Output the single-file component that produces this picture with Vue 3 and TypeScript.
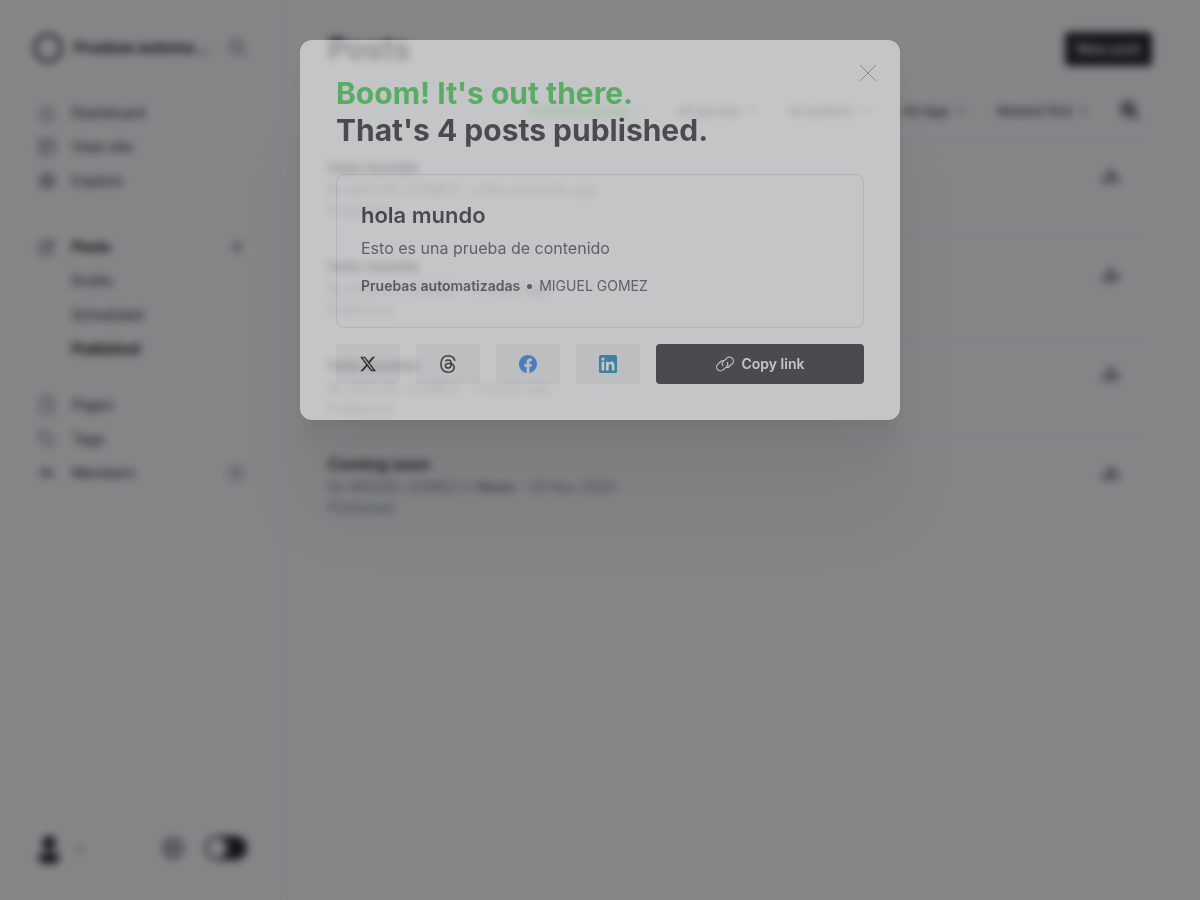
<script setup lang="ts">
import { ref } from 'vue'

interface NavItem { label: string; icon?: string; active?: boolean; sub?: boolean; plus?: boolean; count?: number }
interface Post { title: string; meta: string; tag?: string; date: string }

const groups: NavItem[][] = [
  [
    { label: 'Dashboard', icon: 'home' },
    { label: 'View site', icon: 'site' },
    { label: 'Explore', icon: 'globe' },
  ],
  [
    { label: 'Posts', icon: 'edit', active: true, plus: true },
    { label: 'Drafts', sub: true },
    { label: 'Scheduled', sub: true },
    { label: 'Published', sub: true, active: true },
  ],
  [
    { label: 'Pages', icon: 'page' },
    { label: 'Tags', icon: 'tag' },
    { label: 'Members', icon: 'members', count: 1 },
  ],
]

const icons: Record<string, string> = {
  home: 'M1 8 8 1l7 7M3 7v8h10V7',
  site: 'M1 1h14v14H1zM1 5h14M6 5v10',
  globe: 'M8 1a7 7 0 1 0 0 14A7 7 0 1 0 8 1M1 8h14M8 1c-5 4-5 10 0 14M8 1c5 4 5 10 0 14',
  edit: 'M9 3H1v12h12V8M6 10l1-3 7-6 1 2-6 6z',
  page: 'M2 1h8l4 4v10H2zM10 1v4h4',
  tag: 'M1 1h6l8 8-6 6-8-8zM4 4h1',
  members: 'M5 4a2 2 0 1 0 0 4 2 2 0 1 0 0-4M1 13c0-5 8-5 8 0M11 5a2 2 0 1 0 0 4 2 2 0 1 0 0-4M10 10c3-1 5 1 5 3',
}

const posts: Post[] = [
  { title: 'hola mundo', meta: 'By MIGUEL GOMEZ', date: 'a few seconds ago' },
  { title: 'hola mundo', meta: 'By MIGUEL GOMEZ', date: '2 hours ago' },
  { title: 'hola mundo', meta: 'By MIGUEL GOMEZ', date: '3 hours ago' },
  { title: 'Coming soon', meta: 'By MIGUEL GOMEZ in', tag: 'News', date: '28 Nov 2024' },
]

const filters = ['Published posts', 'All access', 'All authors', 'All tags', 'Newest first']
const night = ref(false)
</script>

<template>
  <div class="app">
    <aside class="sidebar">
      <header class="brand">
        <svg class="logo" viewBox="0 0 32 32"><circle cx="16" cy="16" r="13" /></svg>
        <strong>Pruebas automatizadas</strong>
        <button class="plain" aria-label="Search">
          <svg class="line" width="18" height="18" viewBox="0 0 18 18"><circle cx="7" cy="7" r="6" /><path d="m12 12 5 5" /></svg>
        </button>
      </header>
      <nav>
        <ul v-for="(group, g) in groups" :key="g">
          <li v-for="item in group" :key="item.label">
            <a href="#" :class="{ active: item.active, sub: item.sub }">
              <svg v-if="item.icon" class="line" width="16" height="16" viewBox="0 0 16 16"><path :d="icons[item.icon]" /></svg>
              <span>{{ item.label }}</span>
            </a>
            <button v-if="item.plus" class="plain add" aria-label="New post">
              <svg class="line" width="14" height="14" viewBox="0 0 14 14"><path d="M7 1v12M1 7h12" /></svg>
            </button>
            <span v-if="item.count" class="count">{{ item.count }}</span>
          </li>
        </ul>
      </nav>
      <footer class="tools">
        <button class="plain user" aria-label="Account">
          <svg width="26" height="32" viewBox="0 0 26 32"><circle cx="13" cy="11" r="7" fill="#15171a" /><ellipse cx="13" cy="26" rx="11" ry="6" fill="#15171a" /></svg>
          <svg class="line" width="8" height="5" viewBox="0 0 8 5"><path d="m1 1 3 3 3-3" /></svg>
        </button>
        <button class="plain" aria-label="Settings">
          <svg class="gear" width="24" height="24" viewBox="0 0 24 24"><circle cx="12" cy="12" r="9" /><circle cx="12" cy="12" r="4" /></svg>
        </button>
        <input v-model="night" class="switch" type="checkbox" aria-label="Night shift">
      </footer>
    </aside>

    <main class="content">
      <header class="heading">
        <h1>Posts</h1>
        <button class="new">New post</button>
      </header>
      <div class="filters">
        <button v-for="(f, i) in filters" :key="f" class="filter" :class="{ on: i === 0 }">
          {{ f }}
          <svg class="line" width="8" height="5" viewBox="0 0 8 5"><path d="m1 1 3 3 3-3" /></svg>
        </button>
        <button class="view" aria-label="Search posts">
          <svg width="20" height="20" viewBox="0 0 20 20"><circle cx="8" cy="8" r="6" /><path d="m12 12 6 6M5 8h6M8 5v6" /></svg>
        </button>
      </div>
      <ul class="posts">
        <li v-for="(p, i) in posts" :key="i">
          <div>
            <h3>{{ p.title }}</h3>
            <p>{{ p.meta }} <b v-if="p.tag">{{ p.tag }}</b> - {{ p.date }}</p>
            <p>Published</p>
          </div>
          <button class="stats" aria-label="Analytics">
            <svg width="18" height="16" viewBox="0 0 18 16"><path d="M1 9h4v6H1zM7 1h4v14H7zM13 6h4v9h-4z" /></svg>
          </button>
        </li>
      </ul>
    </main>

    <div class="backdrop">
      <section class="modal" role="dialog" aria-modal="true" aria-labelledby="modal-title">
        <button class="plain close" aria-label="Close">
          <svg width="18" height="18" viewBox="0 0 18 18"><path d="m1 1 16 16M17 1 1 17" /></svg>
        </button>
        <h2 id="modal-title"><span>Boom! It's out there.</span><br>That's 4 posts published.</h2>
        <a class="card" href="#">
          <h4>hola mundo</h4>
          <p>Esto es una prueba de contenido</p>
          <div class="byline"><b>Pruebas automatizadas</b><i></i><span>MIGUEL GOMEZ</span></div>
        </a>
        <div class="share">
          <a href="#" aria-label="Share on X">
            <svg width="18" height="18" viewBox="0 0 24 24" fill="#000"><path d="M18.244 2.25h3.308l-7.227 8.26 8.502 11.24H16.17l-5.214-6.817L4.99 21.75H1.68l7.73-8.835L1.254 2.25H8.08l4.713 6.231zm-1.161 17.52h1.833L7.084 4.126H5.117z" /></svg>
          </a>
          <a href="#" aria-label="Share on Threads">
            <svg width="18" height="18" viewBox="0 0 192 192" fill="#000"><path d="M141.537 88.988a66.667 66.667 0 0 0-2.518-1.143c-1.482-27.307-16.403-42.94-41.457-43.1h-.34c-14.986 0-27.449 6.396-35.12 18.036l13.779 9.452c5.73-8.695 14.724-10.548 21.348-10.548h.229c8.249.053 14.474 2.452 18.503 7.129 2.932 3.405 4.893 8.111 5.864 14.05-7.314-1.243-15.224-1.626-23.68-1.14-23.82 1.371-39.134 15.264-38.105 34.568.522 9.792 5.4 18.216 13.735 23.719 7.047 4.652 16.124 6.927 25.557 6.412 12.458-.683 22.231-5.436 29.049-14.127 5.178-6.6 8.453-15.153 9.899-25.93 5.937 3.583 10.337 8.298 12.767 13.966 4.132 9.635 4.373 25.468-8.546 38.376-11.319 11.308-24.925 16.2-45.488 16.351-22.809-.169-40.06-7.484-51.275-21.742C35.236 139.966 29.808 120.682 29.605 96c.203-24.682 5.63-43.966 16.133-57.317C56.954 24.425 74.204 17.11 97.013 16.94c22.975.17 40.526 7.52 52.171 21.847 5.71 7.026 10.015 15.86 12.853 26.162l16.147-4.308c-3.44-12.68-8.853-23.606-16.219-32.668C147.036 9.607 125.202.195 97.07 0h-.113C68.882.194 47.292 9.642 32.788 28.08 19.882 44.485 13.224 67.315 13.001 95.932L13 96v.067c.224 28.617 6.882 51.447 19.788 67.854C47.292 182.358 68.882 191.806 96.957 192h.113c24.96-.173 42.554-6.708 57.048-21.189 18.963-18.945 18.392-42.692 12.142-57.27-4.484-10.454-13.033-18.945-24.723-24.553ZM98.44 129.507c-10.44.588-21.286-4.098-21.82-14.135-.397-7.442 5.296-15.746 22.461-16.735 1.966-.114 3.895-.169 5.79-.169 6.235 0 12.068.606 17.371 1.765-1.978 24.702-13.58 28.713-23.802 29.274Z" /></svg>
          </a>
          <a href="#" aria-label="Share on Facebook">
            <svg width="18" height="18" viewBox="0 0 24 24" fill="#1877f2"><path d="M24 12.073C24 5.405 18.627 0 12 0S0 5.405 0 12.073C0 18.1 4.388 23.094 10.125 24v-8.437H7.078v-3.49h3.047v-2.66c0-3.025 1.792-4.697 4.533-4.697 1.312 0 2.686.236 2.686.236v2.971h-1.513c-1.491 0-1.956.93-1.956 1.886v2.264h3.328l-.532 3.49h-2.796V24C19.612 23.094 24 18.1 24 12.073z" /></svg>
          </a>
          <a href="#" aria-label="Share on LinkedIn">
            <svg width="18" height="18" viewBox="0 0 24 24" fill="#007ebb"><path d="M22 0H2a2 2 0 0 0-2 2v20a2 2 0 0 0 2 2h20a2 2 0 0 0 2-2V2a2 2 0 0 0-2-2z" /><path fill="#fff" d="M3.5 9h3.6v11.5H3.500zM5.300 3.300a2.100 2.100 0 1 1 0 4.200 2.100 2.100 0 0 1 0-4.200zM9.300 9h3.400v1.600c.5-.9 1.700-1.900 3.500-1.900 3.700 0 4.400 2.400 4.400 5.600v6.200H17V15c0-1.400 0-3.100-1.900-3.100S12.900 13.400 12.900 15v5.500H9.300z" /></svg>
          </a>
          <button class="copy">
            <svg width="18" height="18" viewBox="0 0 24 24"><path d="M9.500 14.500a4.300 4.300 0 0 1 .3-6l4.700-4.300a5.200 5.200 0 0 1 7.300.3 5.200 5.200 0 0 1-.3 7.300l-3.800 3.500a5.200 5.200 0 0 1-4.200 1.300" /><path d="M14.500 9.500a4.300 4.300 0 0 1-.3 6l-4.700 4.300a5.200 5.200 0 0 1-7.300-.3 5.200 5.200 0 0 1 .3-7.300l3.800-3.500a5.200 5.200 0 0 1 4.200-1.300" /></svg>
            Copy link
          </button>
        </div>
      </section>
    </div>
  </div>
</template>

<style>
html, body { background: #fff; }
</style>

<style scoped>
* { box-sizing: border-box; }
.app { display: flex; min-height: 100vh; background: #fff; color: #15171a; font: 14px/20px Inter, "Liberation Sans", sans-serif; }
ul { list-style: none; margin: 0; padding: 0; }
h1, h2, h3, h4, p { margin: 0; }
a { color: inherit; text-decoration: none; }
button { font: inherit; color: inherit; cursor: pointer; }
svg { display: block; flex: none; }
.plain { border: 0; padding: 0; background: none; display: flex; align-items: center; }
.line { fill: none; stroke: currentColor; stroke-width: 1.5; }

.sidebar { width: 281px; flex: none; display: flex; flex-direction: column; padding: 32px 33px 32px 32px; border-right: 1px solid #eceef0; }
.brand { display: flex; align-items: center; gap: 10px; height: 32px; margin-bottom: 32px; }
.brand strong { flex: 1; min-width: 0; font-size: 15px; font-weight: 700; overflow: hidden; white-space: nowrap; text-overflow: ellipsis; }
.brand .plain { margin-left: 8px; color: #394047; }
.logo { width: 32px; height: 32px; fill: none; stroke: #15171a; stroke-width: 3; }
nav ul { margin-bottom: 32px; }
nav ul:nth-child(2) { margin-bottom: 22px; }
nav li { display: flex; align-items: center; justify-content: space-between; height: 34px; }
nav a { display: flex; align-items: center; gap: 17px; padding-left: 7px; color: #394047; font-weight: 500; }
nav a.sub { padding-left: 40px; }
nav a.active { color: #000; font-weight: 700; }
nav a .line { stroke: #5a6067; }
.add { margin-right: 3px; color: #394047; }
.count { background: #e6e9eb; border-radius: 10px; font-size: 12px; width: 22px; text-align: center; }
.tools { margin-top: auto; display: flex; align-items: center; height: 40px; gap: 20px; }
.user { margin-right: auto; padding-left: 4px; gap: 14px; }
.user .line { stroke: #394047; }
.gear { fill: none; stroke: #a3a6ac; stroke-width: 5; }
.switch { appearance: none; margin: 0; width: 42px; height: 24px; border-radius: 12px; background: #15171a; display: flex; align-items: center; padding: 2px; }
.switch::before { content: ""; width: 20px; height: 20px; border-radius: 50%; background: #fff; }
.switch:checked { justify-content: flex-end; }

.content { flex: 1; min-width: 0; padding: 32px 48px 0 47px; }
.heading { display: flex; justify-content: space-between; align-items: center; height: 34px; }
h1 { font-size: 30px; line-height: 34px; font-weight: 700; }
.new { height: 34px; padding: 0 12px; border: 0; border-radius: 4px; background: #15171a; color: #fff; font-size: 14px; font-weight: 500; }
.filters { display: flex; justify-content: flex-end; align-items: center; gap: 32px; height: 74px; padding-top: 16px; border-bottom: 1px solid #eceef0; }
.filter { display: flex; align-items: center; gap: 8px; border: 0; padding: 0; background: none; font-size: 13px; font-weight: 500; color: #394047; }
.filter.on { color: #30cf43; font-weight: 600; }
.view { height: 34px; width: 44px; border: 1px solid #f4f5f6; background: none; padding: 0 11px; border-radius: 4px; margin-left: -12px; }
.view svg { fill: none; stroke: #394047; stroke-width: 3; }
.posts li { display: flex; justify-content: space-between; align-items: flex-start; height: 99px; padding: 16px 14px 0 0; border-bottom: 1px solid #eceef0; }
.posts li:last-child { border: 0; }
h3 { font-size: 16px; line-height: 23px; font-weight: 600; }
.posts p { font-size: 14px; line-height: 21px; color: #7c8b9a; }
.posts b { font-weight: 500; color: #626d79; }
.stats { height: 40px; width: 56px; border: 1px solid #f4f5f6; border-radius: 4px; background: none; padding: 0; display: grid; place-items: center; }
.stats svg { fill: #626971; }

.backdrop { position: fixed; inset: 0; display: flex; justify-content: center; align-items: flex-start; padding: 40px 20px; background: rgba(21, 23, 26, .525); backdrop-filter: blur(4px); }
.modal { position: relative; width: 100%; max-width: 600px; padding: 35px 36px 36px; border-radius: 12px; background: #fff; opacity: .52; box-shadow: 0 3px 2px rgba(0, 0, 0, .02), 0 7px 5px rgba(0, 0, 0, .03), 0 13px 10px rgba(0, 0, 0, .035), 0 22px 18px rgba(0, 0, 0, .04), 0 42px 33px rgba(0, 0, 0, .05), 0 100px 80px rgba(0, 0, 0, .08); }
.close { position: absolute; top: 24px; right: 23px; }
.close path { fill: none; stroke: #15171a; stroke-width: 1; opacity: .5; }
h2 { font-size: 30px; line-height: 37px; font-weight: 700; }
h2 span { color: #30cf43; }
.card { display: block; margin: 25px 0 16px; padding: 24px; border: 1px solid #dde1e5; border-radius: 8px; }
h4 { font-size: 22px; line-height: 32px; font-weight: 600; }
.card p { margin-top: 5px; font-size: 16px; line-height: 24px; color: #394047; }
.byline { display: flex; align-items: center; margin-top: 16px; line-height: 20px; padding-bottom: 7px; color: #394047; }
.byline b { font-weight: 600; }
.byline i { width: 5px; height: 5px; border-radius: 50%; background: currentColor; margin: 0 7px; }
.share { display: flex; gap: 16px; }
.share a { width: 64px; height: 40px; display: grid; place-items: center; border-radius: 4px; background: #f2f3f4; }
.copy { flex: 1; height: 40px; border: 0; border-radius: 4px; display: flex; align-items: center; justify-content: center; gap: 8px; background: #15171a; color: #fff; font-weight: 600; }
.copy path { fill: none; stroke: currentColor; stroke-width: 1.5; }
</style>
